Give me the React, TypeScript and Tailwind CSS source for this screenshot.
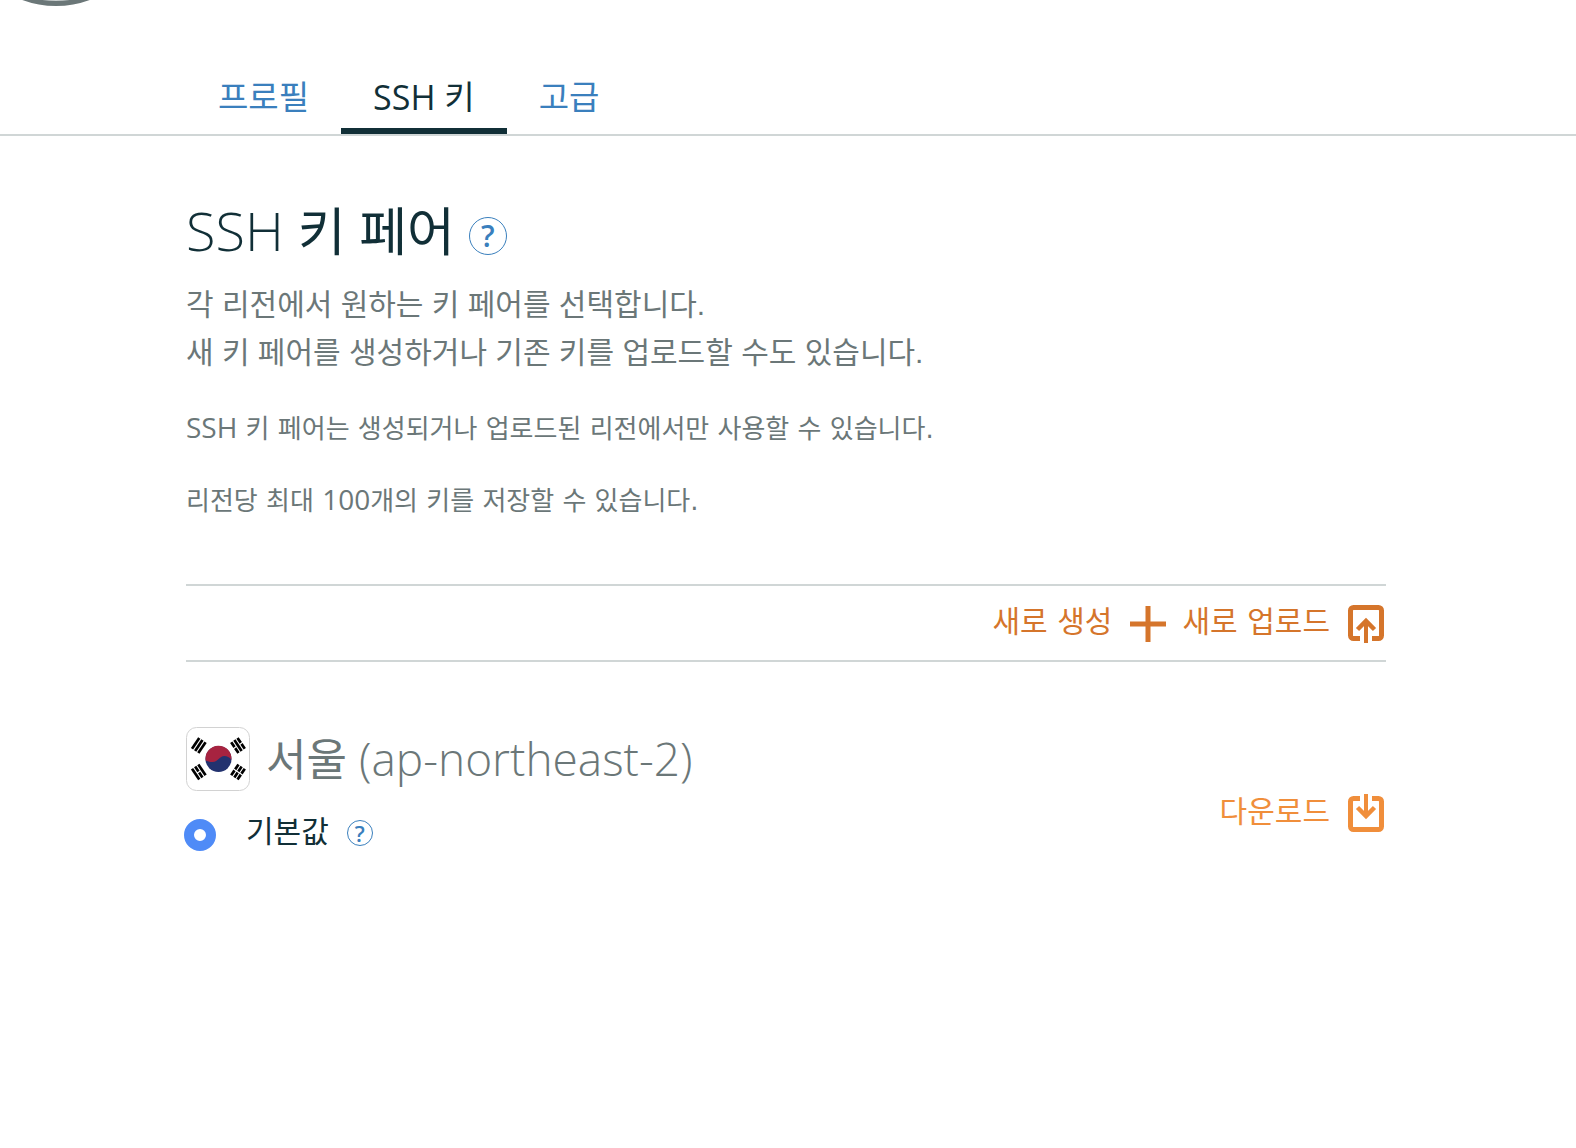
import type { ReactNode } from 'react';

const FONT = "font-['Open_Sans','Noto_Sans_CJK_KR',sans-serif]";

function HelpButton({ small = false, label }: { small?: boolean; label: string }) {
  return (
    <button
      type="button"
      aria-label={label}
      className={
        small
          ? 'flex size-[26px] items-center justify-center rounded-full border border-[#3a7fbd] text-[22px] leading-none font-semibold text-[#3a7fbd]'
          : 'flex size-[38px] items-center justify-center rounded-full border border-[#3a7fbd] text-3xl leading-none font-semibold text-[#3a7fbd]'
      }
    >
      ?
    </button>
  );
}

function UploadIcon() {
  return (
    <svg width="36" height="38" viewBox="0 0 36 38" fill="none" stroke="currentColor" aria-hidden="true">
      <path d="M12 33.500H5.500a3 3 0 0 1-3-3V5.500a3 3 0 0 1 3-3h25a3 3 0 0 1 3 3v25a3 3 0 0 1-3 3H24" strokeWidth="5" />
      <path d="M18 38V17" strokeWidth="4" />
      <path d="M9.500 24.500L18 16l8.500 8.500" strokeWidth="4.500" />
    </svg>
  );
}

function DownloadIcon() {
  return (
    <svg width="36" height="38" viewBox="0 0 36 38" fill="none" stroke="currentColor" aria-hidden="true">
      <path d="M12 4.500H5.500a3 3 0 0 0-3 3v25a3 3 0 0 0 3 3h25a3 3 0 0 0 3-3v-25a3 3 0 0 0-3-3H24" strokeWidth="5" />
      <path d="M18 0v21" strokeWidth="4" />
      <path d="M9.500 13.500L18 22l8.500-8.500" strokeWidth="4.500" />
    </svg>
  );
}

function PlusIcon() {
  return (
    <svg width="36" height="36" viewBox="0 0 36 36" stroke="currentColor" strokeWidth="5" aria-hidden="true">
      <path d="M18 0v36M0 18h36" />
    </svg>
  );
}

/* Three bars of a trigram; a broken bar has a gap in its middle. */
function Trigram({ x, y, angle, broken }: { x: number; y: number; angle: number; broken: boolean[] }) {
  return (
    <g transform={`translate(${x} ${y}) rotate(${angle})`} stroke="#000" strokeWidth="2.7">
      {broken.map((b, i) => (
        <path key={i} d={b ? `M-6.500 ${(i - 1) * 3.8}h5.900M.6 ${(i - 1) * 3.8}h5.900` : `M-6.500 ${(i - 1) * 3.8}h13`} />
      ))}
    </g>
  );
}

function KoreaFlag() {
  return (
    <svg width="64" height="64" viewBox="0 0 64 64" role="img" aria-label="대한민국">
      <rect x="0.500" y="0.500" width="63" height="63" rx="10" fill="#fff" stroke="#d2d2d2" />
      <circle cx="32.500" cy="32" r="13" fill="#23326f" />
      <path
        d="M19.600 33.500A13 13 0 1 1 45.400 33C43.500 30 41 29 38.500 29C33 29 32.500 35 26.500 35C23.500 35 21.500 34.300 19.600 33.500Z"
        fill="#a72340"
      />
      <Trigram x={12.800} y={18.500} angle={-56} broken={[false, false, false]} />
      <Trigram x={52} y={18.500} angle={56} broken={[true, false, true]} />
      <Trigram x={12.800} y={45} angle={56} broken={[false, true, false]} />
      <Trigram x={52} y={45} angle={-56} broken={[true, true, true]} />
    </svg>
  );
}

function Tab({ active = false, children }: { active?: boolean; children: ReactNode }) {
  return (
    <a
      href="#"
      aria-current={active ? 'page' : undefined}
      className={
        active
          ? 'flex h-[66px] items-center border-b-6 border-[#112f37] px-8 pb-0.5 text-[33px] whitespace-pre text-[#112f37]'
          : 'flex h-[66px] items-center border-b-6 border-transparent px-8 pb-0.5 text-[33px] text-[#3a7fbd]'
      }
    >
      {children}
    </a>
  );
}

export default function App() {
  return (
    <div className={`min-h-screen bg-white text-[#6b7778] ${FONT}`}>
      <header className="relative overflow-hidden border-b-2 border-[#d0d6d6] pt-17 pr-1">
        <div className="absolute -top-[190px] -left-[42px] size-[196px] rounded-full border-5 border-[#6b7778] bg-[#c9cfcf]" />
        <nav className="mx-auto flex w-full max-w-[1200px]">
          <Tab>프로필</Tab>
          <Tab active>
            <span className="text-[34px] font-medium">SSH </span>키
          </Tab>
          <Tab>고급</Tab>
        </nav>
      </header>

      <main className="pr-1">
        <div className="mx-auto w-full max-w-[1200px]">
          <div className="flex items-center gap-3.5 pt-[54px]">
            <h1 className="text-[54px] leading-20 font-light text-[#112f37]">
              SSH <span className="text-[52px] font-normal">키 페어</span>
            </h1>
            <div className="pt-2.5">
              <HelpButton label="SSH 키 페어 도움말" />
            </div>
          </div>
          <p className="mt-2.5 font-['Liberation_Sans','Noto_Sans_CJK_KR',sans-serif] text-[30px] leading-12">
            각 리전에서 원하는 키 페어를 선택합니다.
            <br />
            새 키 페어를 생성하거나 기존 키를 업로드할 수도 있습니다.
          </p>
          <div className="mt-8 font-['DejaVu_Sans','Noto_Sans_CJK_KR',sans-serif] text-[26px] leading-10">
            <p>
              <span className="font-['Open_Sans'] text-[28px] leading-none font-medium">SSH</span> 키 페어는 생성되거나 업로드된 리전에서만 사용할 수 있습니다.
            </p>
            <p className="mt-8">
              리전당 최대 <span className="font-['Open_Sans'] text-[28px] leading-none font-medium">100</span>개의 키를 저장할 수 있습니다.
            </p>
          </div>

          <div className="mt-[63px] flex h-[78px] items-center justify-end gap-4 border-y-2 border-[#d0d6d6] pt-0.5 pr-0.5 font-['DejaVu_Sans','Noto_Sans_CJK_KR',sans-serif] text-[30px] leading-10 text-[#d5752b]">
            <button type="button" className="flex items-center gap-4.5">
              <span className="pb-1">새로 생성</span>
              <PlusIcon />
            </button>
            <button type="button" className="flex items-center gap-4.5">
              <span className="pb-1">새로 업로드</span>
              <UploadIcon />
            </button>
          </div>

          <section className="pt-16">
            <h2 className="flex items-center gap-4 text-[46px] leading-16 font-light">
              <KoreaFlag />
              <span>
                <span className="text-[44px] font-normal">서울</span> (ap-northeast-2)
              </span>
            </h2>
            <div className="flex items-start justify-between pr-0.5">
              <div className="-ml-0.5 flex items-center pt-4.5">
                <input
                  id="default-key"
                  type="radio"
                  name="key"
                  defaultChecked
                  className="mt-2 size-8 appearance-none rounded-full border-10 border-[#4f8bf7] bg-white"
                />
                <label htmlFor="default-key" className="ml-7.5 text-[30px] leading-11 text-[#112f37]">
                  기본값
                </label>
                <span className="ml-4.5 pt-1">
                  <HelpButton small label="기본값 도움말" />
                </span>
              </div>
              <button type="button" className="flex items-center gap-4.5 text-[30px] leading-10 text-[#f08e3b]">
                <span className="pb-1">다운로드</span>
                <DownloadIcon />
              </button>
            </div>
          </section>
        </div>
      </main>
    </div>
  );
}
